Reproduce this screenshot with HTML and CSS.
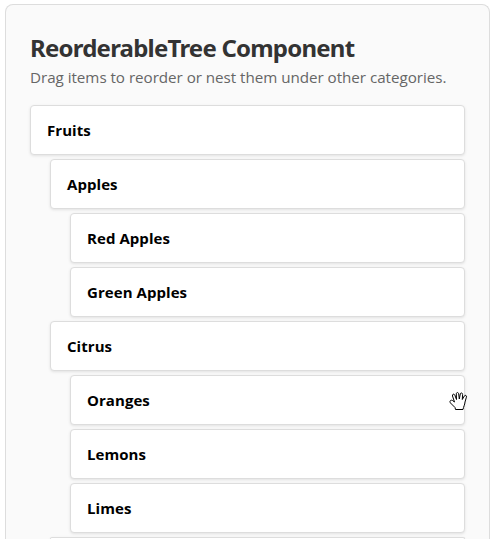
FILE: index.html
```
<!DOCTYPE html>
<html lang="en">
<head>
<meta charset="utf-8">
<title>ReorderableTree Component</title>
<link rel="stylesheet" href="styles.css">
</head>
<body>
<main class="panel">
  <h1>ReorderableTree Component</h1>
  <p class="intro">Drag items to reorder or nest them under other categories.</p>
  <ul class="tree">
    <li><div class="item">Fruits</div>
      <ul>
        <li><div class="item">Apples</div>
          <ul>
            <li><div class="item">Red Apples</div></li>
            <li><div class="item">Green Apples</div></li>
          </ul>
        </li>
        <li><div class="item">Citrus</div>
          <ul>
            <li><div class="item">Oranges</div></li>
            <li><div class="item">Lemons</div></li>
            <li><div class="item">Limes</div></li>
          </ul>
        </li>
        <li><div class="item next"></div></li>
      </ul>
    </li>
  </ul>
</main>
<svg class="cursor" width="20" height="20" viewBox="0 0 20 20"><path d="M6.500 18.500 L6 16.500 L1.500 12 C0 10 2 8.500 3.500 9.500 L5.500 11 L3.500 5 C3 3 5 2.500 5.800 4 L7.500 8.500 L7.300 3 C7.300 1 9.500 1 9.700 3 L10.300 8 L11.300 3 C11.600 1.500 13.700 1.700 13.600 3.500 L13.300 8.500 L15.300 5 C16.200 3.600 18 4.500 17.400 6.200 L16 11 C15.800 14 14.500 15.500 14 18.500 Z"/></svg>
</body>
</html>
```
FILE: styles.css
```
* { box-sizing: border-box; }
body { margin: 0; height: 539px; overflow: hidden; background: #fff; font-family: "Open Sans", "Noto Sans", sans-serif; }
.panel { width: 485px; height: 535px; margin: 4px 0 0 5px; padding: 24px 24px 0; border: 1px solid #ddd; border-bottom: 0; border-radius: 8px 8px 0 0; background: #fafafa; overflow: hidden; }
h1 { margin: 0; font-family: "Noto Sans", sans-serif; font-size: 24px; line-height: 38px; font-weight: 700; color: #333; white-space: nowrap; letter-spacing: -0.78px; }
.intro { margin: 0 0 18px; font-size: 15.2px; line-height: 20px; color: #666; white-space: nowrap; letter-spacing: -0.035px; }
ul { list-style: none; margin: 0; padding: 0 0 0 20px; }
.tree { padding: 0; }
.item { height: 50px; margin-bottom: 4px; padding: 0 16px; border: 1px solid #ddd; border-radius: 4px; background: #fff; box-shadow: 0 1px 3px rgba(0,0,0,.1); font-size: 15px; line-height: 48px; font-weight: 700; letter-spacing: 0.06px; color: #000; }
.next { height: 2px; margin: 0; border-bottom: 0; border-radius: 4px 4px 0 0; }
.cursor { position: absolute; left: 449px; top: 391px; fill: #fff; stroke: #000; stroke-width: 1; }
```
